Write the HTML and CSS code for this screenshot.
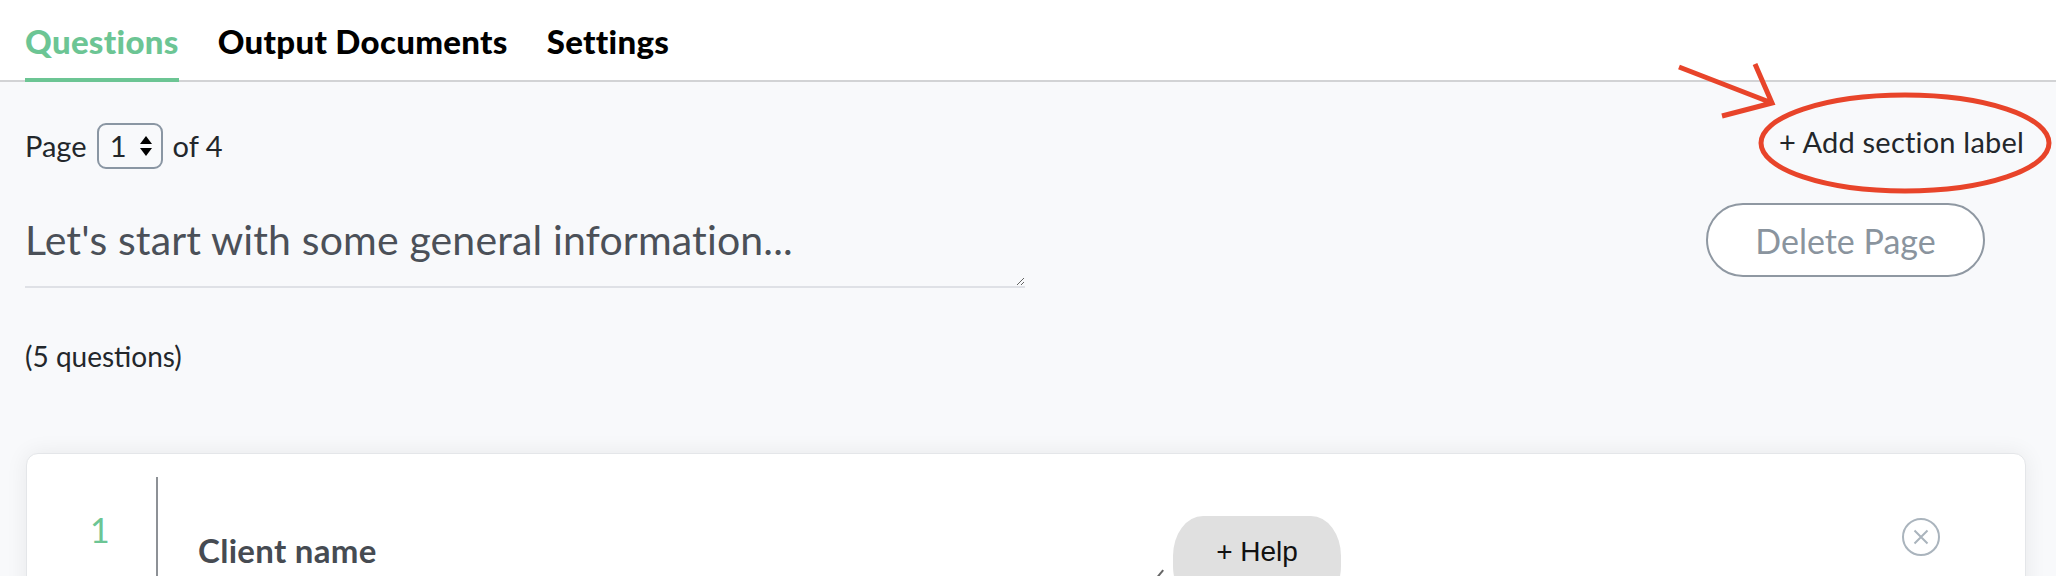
FILE: index.html
```html
<!DOCTYPE html>
<html lang="en">
<head>
<meta charset="utf-8">
<title>Questions</title>
<link rel="stylesheet" href="styles.css">
</head>
<body>
<header class="tabs">
  <div class="tab tab-active">Questions</div>
  <div class="tab">Output Documents</div>
  <div class="tab">Settings</div>
</header>
<main class="main">
  <div class="page-row">
    <div class="pager">
      <span>Page</span>
      <div class="page-select">
        <span class="page-num">1</span>
        <svg class="spin" width="14" height="22" viewBox="0 0 14 22"><path d="M7 1 L13 9 L1 9 Z" fill="#000"/><path d="M7 21 L13 13 L1 13 Z" fill="#000"/></svg>
      </div>
      <span>of 4</span>
    </div>
    <div class="add-label">+ Add section label</div>
  </div>
  <div class="title-row">
    <textarea class="page-title" spellcheck="false">Let's start with some general information...</textarea>
    <button class="delete-btn">Delete Page</button>
  </div>
  <div class="count">(5 questions)</div>
  <section class="card">
    <div class="q-num">1</div>
    <div class="q-body">
      <div class="q-label">Client name<span class="q-resize"></span></div>
      <button class="help-btn">+ Help</button>
      <div class="q-spacer"></div>
      <svg class="q-close" width="40" height="40" viewBox="0 0 40 40"><circle cx="20" cy="20" r="18" fill="none" stroke="#aab4bd" stroke-width="2"/><path d="M13.5 13.5 L26.5 26.5 M26.5 13.5 L13.5 26.5" stroke="#aab4bd" stroke-width="2" fill="none"/></svg>
    </div>
  </section>
</main>
<svg class="annotation" width="2056" height="576" viewBox="0 0 2056 576">
  <ellipse cx="1905" cy="143" rx="144" ry="48" fill="none" stroke="#e8442a" stroke-width="5"/>
  <path d="M1679 67 L1772 103 M1755 64 L1772 103 L1722 116" fill="none" stroke="#e8442a" stroke-width="5" stroke-linecap="butt" stroke-linejoin="miter"/>
</svg>
</body>
</html>
```
FILE: styles.css
```css
html, body {
  margin: 0;
  padding: 0;
}
body {
  width: 2056px;
  height: 576px;
  overflow: hidden;
  background: #f8f9fb;
  font-family: Lato, "Noto Sans", sans-serif;
  color: #23272b;
  position: relative;
}
.tabs {
  display: flex;
  gap: 39px;
  height: 80px;
  padding-left: 25px;
  background: #ffffff;
  border-bottom: 2px solid #d2d3d5;
}
.tab {
  position: relative;
  padding-top: 22px;
  font-size: 33px;
  line-height: 1.2;
  font-weight: 900;
  letter-spacing: 0.3px;
  color: #000000;
}
.tab-active {
  color: #6cc594;
}
.tab-active::after {
  content: "";
  position: absolute;
  left: 0;
  right: 0;
  bottom: -2px;
  height: 4px;
  background: #6cc594;
}
.main {
  padding: 0 30px 0 25px;
}
.page-row {
  display: flex;
  justify-content: space-between;
  align-items: center;
  margin-top: 41px;
  height: 46px;
}
.pager {
  display: flex;
  align-items: center;
  gap: 10px;
  font-size: 29px;
  line-height: 1.2;
}
.page-select {
  box-sizing: border-box;
  width: 66px;
  height: 46px;
  border: 2px solid #8a96a3;
  border-radius: 9px;
  display: flex;
  align-items: center;
  justify-content: flex-end;
  gap: 12px;
  padding-right: 8px;
}
.page-num {
  font-size: 29px;
}
.add-label {
  font-size: 29px;
  line-height: 1.2;
  letter-spacing: 0.2px;
  color: #23272b;
  margin: -7px 2px 0 0;
}
.title-row {
  display: flex;
  align-items: flex-start;
  justify-content: space-between;
  margin-top: 34px;
}
.page-title {
  box-sizing: border-box;
  width: 1000px;
  height: 73px;
  margin: 12px 0 0 0;
  padding: 0;
  border: none;
  border-bottom: 2px solid #dfe1e6;
  background: transparent;
  font-family: Lato, "Noto Sans", sans-serif;
  font-size: 41px;
  line-height: 1.2;
  letter-spacing: 0.15px;
  font-weight: 400;
  color: #4b5058;
  outline: none;
  resize: vertical;
  overflow: hidden;
}
.delete-btn {
  box-sizing: border-box;
  width: 279px;
  height: 74px;
  margin-right: 41px;
  border: 2px solid #8f98a2;
  border-radius: 37px;
  background: #ffffff;
  font-family: Lato, "Noto Sans", sans-serif;
  font-size: 34px;
  color: #8a949e;
  padding: 0;
}
.count {
  margin-top: 52px;
  font-size: 28px;
  line-height: 1.2;
  color: #23272b;
}
.card {
  margin: 79px 0 0 1px;
  height: 240px;
  background: #ffffff;
  border: 1px solid #e4e6e9;
  border-radius: 12px;
  box-shadow: 0 0 22px rgba(0, 0, 0, 0.07);
  display: flex;
  padding-top: 23px;
}
.q-num {
  width: 129px;
  box-sizing: border-box;
  padding: 33px 0 0 63px;
  font-size: 34px;
  line-height: 1.2;
  color: #6cc594;
}
.q-body {
  flex: 1;
  display: flex;
  align-items: flex-start;
  border-left: 2px solid #8d9196;
  padding-left: 40px;
}
.q-label {
  position: relative;
  width: 967px;
  padding-top: 54px;
  font-size: 33px;
  line-height: 1.2;
  letter-spacing: 0.3px;
  font-weight: 700;
  color: #464b52;
}
.q-resize {
  position: absolute;
  right: 4px;
  top: 92px;
  width: 2px;
  height: 10px;
  background: #666;
  transform: rotate(40deg);
}
.help-btn {
  margin: 39px 0 0 8px;
  width: 168px;
  height: 90px;
  border: none;
  border-radius: 30px / 40px;
  background: #e0e0e0;
  font-family: "Liberation Sans", Arial, sans-serif;
  font-size: 28px;
  line-height: 1.15;
  color: #111111;
  padding: 20px 0 0 0;
  display: flex;
  justify-content: center;
  align-items: flex-start;
}
.q-spacer {
  flex: 1;
}
.q-close {
  margin: 40px 84px 0 0;
}
.annotation {
  position: absolute;
  left: 0;
  top: 0;
  pointer-events: none;
}
```
